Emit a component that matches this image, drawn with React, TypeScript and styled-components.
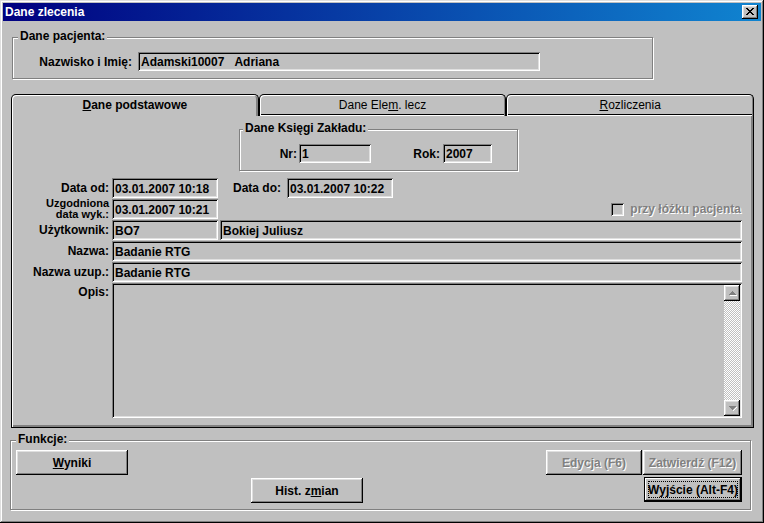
import React from 'react';
import styled, { createGlobalStyle, css } from 'styled-components';

const GlobalStyle = createGlobalStyle`
  html, body {
    margin: 0;
    padding: 0;
    background: #c0c0c0;
  }
  body {
    font-family: 'Liberation Sans', Arial, sans-serif;
    font-size: 12px;
  }
`;

const raised = css`
  box-shadow: inset -1px -1px #000, inset 1px 1px #fff, inset -2px -2px #808080, inset 2px 2px #dfdfdf;
`;

const sunken = css`
  box-shadow: inset 1px 1px #808080, inset -1px -1px #fff, inset 2px 2px #000, inset -2px -2px #dfdfdf;
`;

const disabledText = css`
  color: #808080;
  text-shadow: 1px 1px 0 #fff;
`;

const Window = styled.div`
  width: 764px;
  height: 523px;
  box-sizing: border-box;
  padding: 3px;
  background: #c0c0c0;
  box-shadow: inset -1px -1px #000, inset 1px 1px #dfdfdf, inset -2px -2px #808080, inset 2px 2px #fff;
  display: flex;
  flex-direction: column;
  font-family: 'Liberation Sans', Arial, sans-serif;
  font-size: 12px;
  color: #000;
`;

const TitleBar = styled.div`
  height: 18px;
  display: flex;
  align-items: center;
  justify-content: space-between;
  padding: 0 3px 0 2px;
  background: linear-gradient(to right, #000080, #1084d0);
  color: #fff;
  font-weight: bold;
  font-size: 12px;
`;

const CloseButton = styled.div`
  width: 16px;
  height: 14px;
  background: #c0c0c0;
  ${raised};
  display: flex;
  align-items: center;
  justify-content: center;
  padding-bottom: 1px;
  box-sizing: border-box;
`;

const GroupBox = styled.div<{ $w: number; $h: number; $ml: number; $mt: number }>`
  position: relative;
  box-sizing: border-box;
  width: ${(p) => p.$w}px;
  height: ${(p) => p.$h}px;
  margin-left: ${(p) => p.$ml}px;
  margin-top: ${(p) => p.$mt}px;
  border: 1px solid #808080;
  box-shadow: inset 1px 1px #fff, 1px 1px #fff;
  flex: none;
`;

const Legend = styled.div<{ $left: number }>`
  position: absolute;
  top: -8px;
  left: ${(p) => p.$left}px;
  padding: 0 2px;
  line-height: 13px;
  background: #c0c0c0;
  font-weight: bold;
  white-space: nowrap;
`;

const GroupRow = styled.div<{ $pl: number }>`
  display: flex;
  align-items: center;
  margin-top: 14px;
  padding-left: ${(p) => p.$pl}px;
`;

const Label = styled.div<{ $w?: number; $ml?: number; $align?: string }>`
  font-weight: bold;
  white-space: nowrap;
  flex: none;
  width: ${(p) => (p.$w ? `${p.$w}px` : 'auto')};
  margin-left: ${(p) => p.$ml ?? 0}px;
  text-align: ${(p) => p.$align ?? 'right'};
`;

const Field = styled.div<{ $w?: number; $h?: number; $ml?: number }>`
  box-sizing: border-box;
  height: ${(p) => p.$h ?? 20}px;
  width: ${(p) => (p.$w ? `${p.$w}px` : 'auto')};
  flex: ${(p) => (p.$w ? 'none' : '1 1 0')};
  margin-left: ${(p) => p.$ml ?? 0}px;
  background: #c0c0c0;
  ${sunken};
  padding: 1px 3px 0;
  display: flex;
  align-items: center;
  font-weight: bold;
  white-space: nowrap;
  overflow: hidden;
`;

const Tabs = styled.div`
  display: flex;
  margin: 15px 0 0 8px;
  width: 743px;
  height: 22px;
`;

const Tab = styled.div<{ $active?: boolean }>`
  flex: 1 1 0;
  box-sizing: border-box;
  border: 1px solid #000;
  border-bottom: none;
  border-radius: 5px 5px 0 0;
  display: flex;
  align-items: center;
  justify-content: center;
  padding-bottom: 2px;
  font-weight: ${(p) => (p.$active ? 'bold' : 'normal')};
  ${(p) =>
    p.$active
      ? css`
          background: #c0c0c0;
          box-shadow: inset 1px 1px #fff, inset -2px 0 #808080;
        `
      : css`
          background: linear-gradient(to top, #fff 0 1px, #000 1px 2px, #c0c0c0 2px);
          box-shadow: inset 1px 1px #fff, inset -1px 0 #808080;
        `}
`;

const Panel = styled.div`
  box-sizing: border-box;
  width: 743px;
  height: 312px;
  margin-left: 8px;
  border: 1px solid #000;
  border-top: none;
  box-shadow: inset 1px 0 #fff, inset -2px -2px #808080;
  padding: 13px 11px 0 0;
  display: flex;
  flex-direction: column;
`;

const FormRow = styled.div<{ $mt?: number; $h?: number; $top?: boolean }>`
  display: flex;
  align-items: ${(p) => (p.$top ? 'flex-start' : 'center')};
  height: ${(p) => p.$h ?? 20}px;
  margin-top: ${(p) => p.$mt ?? 1}px;
`;

const RowLabel = styled.div<{ $pt?: number; $twoLine?: boolean }>`
  width: 97px;
  margin-right: 3px;
  flex: none;
  font-weight: bold;
  text-align: right;
  white-space: nowrap;
  font-size: ${(p) => (p.$twoLine ? 11 : 12)}px;
  line-height: ${(p) => (p.$twoLine ? 11 : 13)}px;
  padding-top: ${(p) => p.$pt ?? 0}px;
`;

const CheckWrap = styled.div`
  margin-left: auto;
  margin-right: 1px;
  display: flex;
  align-items: center;
  gap: 6px;
  font-weight: bold;
  ${disabledText};
`;

const CheckBox = styled.div`
  width: 13px;
  height: 13px;
  box-sizing: border-box;
  background: #c0c0c0;
  ${sunken};
`;

const Memo = styled.div`
  flex: 1 1 0;
  height: 135px;
  box-sizing: border-box;
  background: #c0c0c0;
  ${sunken};
  padding: 2px;
  display: flex;
  justify-content: flex-end;
`;

const ScrollBar = styled.div`
  width: 16px;
  display: flex;
  flex-direction: column;
  background: repeating-conic-gradient(#fff 0 25%, #c0c0c0 0 50%) 0 0 / 2px 2px;
`;

const ScrollButton = styled.div`
  width: 16px;
  height: 16px;
  background: #c0c0c0;
  ${raised};
  display: flex;
  align-items: center;
  justify-content: center;
`;

const Track = styled.div`
  flex: 1;
`;

const Functions = styled.div`
  display: flex;
  flex-direction: column;
  padding: 9px 8px 0 5px;
`;

const ButtonRow = styled.div<{ $mt?: number }>`
  display: flex;
  align-items: flex-start;
  margin-top: ${(p) => p.$mt ?? 0}px;
`;

const Button = styled.div<{ $w: number; $ml?: number | 'auto'; $mt?: number; $disabled?: boolean; $default?: boolean }>`
  position: relative;
  box-sizing: border-box;
  width: ${(p) => p.$w}px;
  height: 25px;
  margin-left: ${(p) => (p.$ml === 'auto' ? 'auto' : `${p.$ml ?? 0}px`)};
  margin-top: ${(p) => p.$mt ?? 0}px;
  background: #c0c0c0;
  display: flex;
  align-items: center;
  justify-content: center;
  font-weight: bold;
  white-space: nowrap;
  flex: none;
  ${(p) =>
    p.$default
      ? css`
          box-shadow: inset 0 0 0 1px #000, inset -2px -2px #000, inset 2px 2px #fff, inset -3px -3px #808080;
        `
      : raised};
  ${(p) => p.$disabled && disabledText};
`;

const FocusRing = styled.div`
  position: absolute;
  inset: 4px;
  border: 1px dotted #000;
`;

const CloseIcon = () => (
  <svg width="8" height="7" viewBox="0 0 8 7" shapeRendering="crispEdges">
    <path
      d="M0 0h2v1H0zM6 0h2v1H6zM1 1h2v1H1zM5 1h2v1H5zM2 2h4v1H2zM3 3h2v1H3zM2 4h4v1H2zM1 5h2v1H1zM5 5h2v1H5zM0 6h2v1H0zM6 6h2v1H6z"
      fill="#000"
    />
  </svg>
);

const Arrow = ({ up }: { up?: boolean }) => (
  <svg width="7" height="5" viewBox="0 0 7 5" shapeRendering="crispEdges" style={{ overflow: 'visible' }}>
    {up ? (
      <>
        <path d="M4 1h1v1H4zM5 2h1v1H5zM6 3h1v1H6zM1 4h7v1H1z" fill="#fff" />
        <path d="M3 0h1v1H3zM2 1h3v1H2zM1 2h5v1H1zM0 3h7v1H0z" fill="#808080" />
      </>
    ) : (
      <>
        <path d="M7 1h1v1H7zM6 2h1v1H6zM5 3h1v1H5zM4 4h1v1H4z" fill="#fff" />
        <path d="M0 0h7v1H0zM1 1h5v1H1zM2 2h3v1H2zM3 3h1v1H3z" fill="#808080" />
      </>
    )}
  </svg>
);

export default function App() {
  return (
    <>
      <GlobalStyle />
      <Window>
        <TitleBar>
          <span>Dane zlecenia</span>
          <CloseButton>
            <CloseIcon />
          </CloseButton>
        </TitleBar>

        <GroupBox $w={641} $h={42} $ml={9} $mt={16}>
          <Legend $left={5}>Dane pacjenta:</Legend>
          <GroupRow $pl={0}>
            <Label $w={119}>Nazwisko i Imię:</Label>
            <Field $w={402} $h={19} $ml={6}>
              Adamski10007&nbsp;&nbsp;&nbsp;Adriana
            </Field>
          </GroupRow>
        </GroupBox>

        <Tabs>
          <Tab $active>
            <span>
              <u>D</u>ane podstawowe
            </span>
          </Tab>
          <Tab>
            <span>
              Dane Ele<u>m</u>. lecz
            </span>
          </Tab>
          <Tab>
            <span>
              <u>R</u>ozliczenia
            </span>
          </Tab>
        </Tabs>

        <Panel>
          <GroupBox $w={279} $h={42} $ml={227} $mt={0}>
            <Legend $left={3}>Dane Księgi Zakładu:</Legend>
            <GroupRow $pl={36}>
              <Label $w={21}>Nr:</Label>
              <Field $w={72} $h={19} $ml={2}>
                1
              </Field>
              <Label $w={28} $ml={41}>
                Rok:
              </Label>
              <Field $w={49} $h={19} $ml={3}>
                2007
              </Field>
            </GroupRow>
          </GroupBox>

          <FormRow $mt={7}>
            <RowLabel>Data od:</RowLabel>
            <Field $w={106}>03.01.2007 10:18</Field>
            <Label $w={54} $ml={15} $align="left">
              Data do:
            </Label>
            <Field $w={106}>03.01.2007 10:22</Field>
          </FormRow>

          <FormRow>
            <RowLabel $twoLine>
              Uzgodniona
              <br />
              data wyk.:
            </RowLabel>
            <Field $w={106}>03.01.2007 10:21</Field>
            <CheckWrap>
              <CheckBox />
              <span>przy łóżku pacjenta</span>
            </CheckWrap>
          </FormRow>

          <FormRow>
            <RowLabel>Użytkownik:</RowLabel>
            <Field $w={106}>BO7</Field>
            <Field $ml={2}>Bokiej Juliusz</Field>
          </FormRow>

          <FormRow>
            <RowLabel>Nazwa:</RowLabel>
            <Field>Badanie RTG</Field>
          </FormRow>

          <FormRow>
            <RowLabel>Nazwa uzup.:</RowLabel>
            <Field>Badanie RTG</Field>
          </FormRow>

          <FormRow $h={135} $top>
            <RowLabel $pt={3}>Opis:</RowLabel>
            <Memo>
              <ScrollBar>
                <ScrollButton>
                  <Arrow up />
                </ScrollButton>
                <Track />
                <ScrollButton>
                  <Arrow />
                </ScrollButton>
              </ScrollBar>
            </Memo>
          </FormRow>
        </Panel>

        <GroupBox $w={741} $h={70} $ml={7} $mt={12}>
          <Legend $left={5}>Funkcje:</Legend>
          <Functions>
            <ButtonRow>
              <Button $w={112}>
                <span>
                  <u>W</u>yniki
                </span>
              </Button>
              <Button $w={96} $ml="auto" $disabled>
                Edycja (F6)
              </Button>
              <Button $w={99} $ml={1} $disabled>
                Zatwierdź (F12)
              </Button>
            </ButtonRow>
            <ButtonRow $mt={2}>
              <Button $w={112} $ml={235} $mt={1}>
                <span>
                  Hist. z<u>m</u>ian
                </span>
              </Button>
              <Button $w={98} $ml="auto" $default>
                Wyjście (Alt-F4)
                <FocusRing />
              </Button>
            </ButtonRow>
          </Functions>
        </GroupBox>
      </Window>
    </>
  );
}
